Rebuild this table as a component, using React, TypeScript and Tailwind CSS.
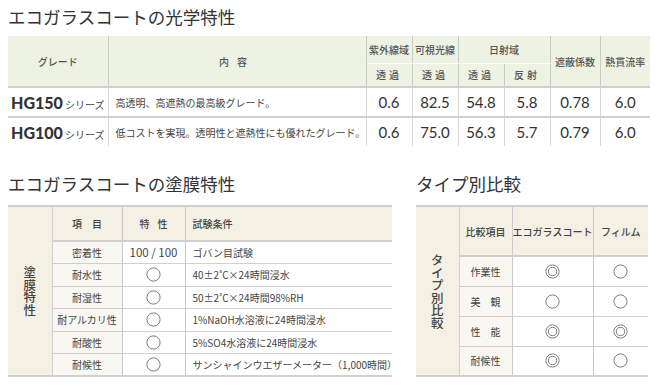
const jp = "font-['Noto_Sans_CJK_JP','Noto_Sans',sans-serif]";

type Mark = "single" | "double";

function Circle({ kind }: { kind: Mark }) {
  return (
    <svg width="15" height="15" viewBox="0 0 15 15" className="mx-auto block">
      <circle cx="7.5" cy="7.5" r="6.6" fill="none" stroke="#7d7d7d" strokeWidth="1" />
      {kind === "double" && (
        <circle cx="7.5" cy="7.5" r="4.1" fill="none" stroke="#7d7d7d" strokeWidth="1" />
      )}
    </svg>
  );
}

// label set in vertical writing, one glyph per em
function VerticalLabel({ text }: { text: string }) {
  return (
    <div className="flex justify-center">
      <span className="text-[12.5px] leading-[13px] text-[#444] [writing-mode:vertical-rl] [text-orientation:upright]">
        {text}
      </span>
    </div>
  );
}

const grades = [
  {
    name: "HG150",
    desc: "高透明、高遮熱の最高級グレード。",
    values: ["0.6", "82.5", "54.8", "5.8", "0.78", "6.0"],
  },
  {
    name: "HG100",
    desc: "低コストを実現。透明性と遮熱性にも優れたグレード。",
    values: ["0.6", "75.0", "56.3", "5.7", "0.79", "6.0"],
  },
];

const coatingRows: { item: string; spec: string; test: string }[] = [
  { item: "密着性", spec: "100 / 100", test: "ゴバン目試験" },
  { item: "耐水性", spec: "", test: "40±2˚C×24時間浸水" },
  { item: "耐湿性", spec: "", test: "50±2˚C×24時間98%RH" },
  { item: "耐アルカリ性", spec: "", test: "1%NaOH水溶液に24時間浸水" },
  { item: "耐酸性", spec: "", test: "5%SO4水溶液に24時間浸水" },
  { item: "耐候性", spec: "", test: "サンシャインウエザーメーター（1,000時間）" },
];

const compareRows: { item: string; eco: Mark; film: Mark }[] = [
  { item: "作業性", eco: "double", film: "single" },
  { item: "美　観", eco: "single", film: "single" },
  { item: "性　能", eco: "double", film: "double" },
  { item: "耐候性", eco: "double", film: "single" },
];

function OpticalTable() {
  const head = "bg-[#eef2e2] text-[10px] text-[#555] font-medium";
  return (
    <table className="w-[642px] table-fixed border-collapse">
      <colgroup>
        <col className="w-[100px]" />
        <col className="w-[258px]" />
        <col className="w-[46px]" />
        <col className="w-[46px]" />
        <col className="w-[46px]" />
        <col className="w-[46px]" />
        <col className="w-[50px]" />
        <col className="w-[50px]" />
      </colgroup>
      <thead>
        <tr className="h-[27px]">
          <th rowSpan={2} className={`${head} border-r border-[#c8cbbd]`}>グレード</th>
          <th rowSpan={2} className={`${head} border-r border-[#c8cbbd] tracking-[0.8em]`}>内容</th>
          <th className={`${head} border-r border-b border-[#c8cbbd] border-b-white`}>紫外線域</th>
          <th className={`${head} border-r border-b border-[#c8cbbd] border-b-white`}>可視光線</th>
          <th colSpan={2} className={`${head} border-r border-b border-[#c8cbbd] border-b-white`}>日射域</th>
          <th rowSpan={2} className={`${head} border-r border-[#c8cbbd]`}>遮蔽係数</th>
          <th rowSpan={2} className={head}>熱貫流率</th>
        </tr>
        <tr className="h-[24px]">
          <th className={`${head} border-r border-[#c8cbbd] tracking-[0.3em]`}>透過</th>
          <th className={`${head} border-r border-[#c8cbbd] tracking-[0.3em]`}>透過</th>
          <th className={`${head} border-r border-[#c8cbbd] tracking-[0.3em]`}>透過</th>
          <th className={`${head} border-r border-[#c8cbbd] tracking-[0.3em]`}>反射</th>
        </tr>
      </thead>
      <tbody>
        {grades.map((g, i) => (
          <tr
            key={g.name}
            className={`${i === 0 ? "h-[30px] border-t-2" : "h-[29px] border-t-2"} border-[#cfcfcf]`}
          >
            <td className="border-r border-[#d8d8d8] text-center whitespace-nowrap">
              <span className="font-['Lato',sans-serif] text-[16px] font-black text-[#333]">
                {g.name}
              </span>
              <span className="ml-[2px] text-[10px] text-[#444]">シリーズ</span>
            </td>
            <td className="border-r border-[#d8d8d8] pl-[7px] text-[10px] text-[#444]">{g.desc}</td>
            {g.values.map((v, j) => (
              <td
                key={j}
                className={`${j < 5 ? "border-r border-[#d8d8d8]" : ""} text-center font-['Lato',sans-serif] text-[15px] text-[#333]`}
              >
                {v}
              </td>
            ))}
          </tr>
        ))}
      </tbody>
    </table>
  );
}

function CoatingTable() {
  const cell = "border-r border-[#c9c9c9]";
  return (
    <table className="w-[384px] table-fixed border-collapse">
      <colgroup>
        <col className="w-[44px]" />
        <col className="w-[70px]" />
        <col className="w-[63px]" />
        <col className="w-[207px]" />
      </colgroup>
      <tbody>
        <tr className="h-[35px] border-t-2 border-b-2 border-[#cfcfcf] bg-[#f4f1e4] text-[10px] font-medium text-[#444]">
          <td rowSpan={7} className={`${cell} border-b-2 border-[#cfcfcf] bg-[#f4f1e4] align-middle`}>
            <VerticalLabel text="塗膜特性" />
          </td>
          <td className={`${cell} text-center tracking-[1em] pl-[10px]`}>項目</td>
          <td className={`${cell} text-center tracking-[0.8em] pl-[8px]`}>特性</td>
          <td className="pl-[7px]">試験条件</td>
        </tr>
        {coatingRows.map((r, i) => (
          <tr
            key={r.item}
            className={`h-[22.5px] ${i < coatingRows.length - 1 ? "border-b" : "border-b-2"} border-[#cfcfcf]`}
          >
            <td className={`${cell} bg-[#f8f7f1] text-center text-[10px] text-[#444]`}>{r.item}</td>
            <td className={`${cell} text-center text-[11.5px] text-[#444]`}>
              {r.spec ? r.spec : <Circle kind="single" />}
            </td>
            <td className="pl-[7px] text-[10px] text-[#444] whitespace-nowrap">{r.test}</td>
          </tr>
        ))}
      </tbody>
    </table>
  );
}

function CompareTable() {
  const cell = "border-r border-[#c9c9c9]";
  return (
    <table className="w-[232px] table-fixed border-collapse">
      <colgroup>
        <col className="w-[43px]" />
        <col className="w-[53px]" />
        <col className="w-[81px]" />
        <col className="w-[55px]" />
      </colgroup>
      <tbody>
        <tr className="h-[50px] border-t-2 border-b-2 border-[#cfcfcf] bg-[#f4f1e4] text-[10px] font-medium text-[#444]">
          <td rowSpan={5} className={`${cell} border-b-2 border-[#cfcfcf] bg-[#f4f1e4] align-middle`}>
            <VerticalLabel text="タイプ別比較" />
          </td>
          <td className={`${cell} text-center`}>比較項目</td>
          <td className={`${cell} text-center whitespace-nowrap`}>エコガラスコート</td>
          <td className="text-center">フィルム</td>
        </tr>
        {compareRows.map((r, i) => (
          <tr
            key={r.item}
            className={`h-[30px] ${i < compareRows.length - 1 ? "border-b" : "border-b-2"} border-[#cfcfcf]`}
          >
            <td className={`${cell} bg-[#f8f7f1] text-center text-[10px] text-[#444]`}>{r.item}</td>
            <td className={cell}>
              <Circle kind={r.eco} />
            </td>
            <td>
              <Circle kind={r.film} />
            </td>
          </tr>
        ))}
      </tbody>
    </table>
  );
}

export default function App() {
  return (
    <div className={`${jp} w-[660px] h-[386px] bg-white px-[8px] pt-[4px] text-[#333]`}>
      <h2 className="text-[17.5px] leading-[26px] text-[#333]">エコガラスコートの光学特性</h2>
      <div className="mt-[6px]">
        <OpticalTable />
      </div>

      <div className="mt-[25px] flex gap-[24px]">
        <section>
          <h2 className="text-[17.5px] leading-[26px] text-[#333]">エコガラスコートの塗膜特性</h2>
          <div className="mt-[8px]">
            <CoatingTable />
          </div>
        </section>
        <section>
          <h2 className="text-[17.5px] leading-[26px] text-[#333]">タイプ別比較</h2>
          <div className="mt-[8px]">
            <CompareTable />
          </div>
        </section>
      </div>
    </div>
  );
}
